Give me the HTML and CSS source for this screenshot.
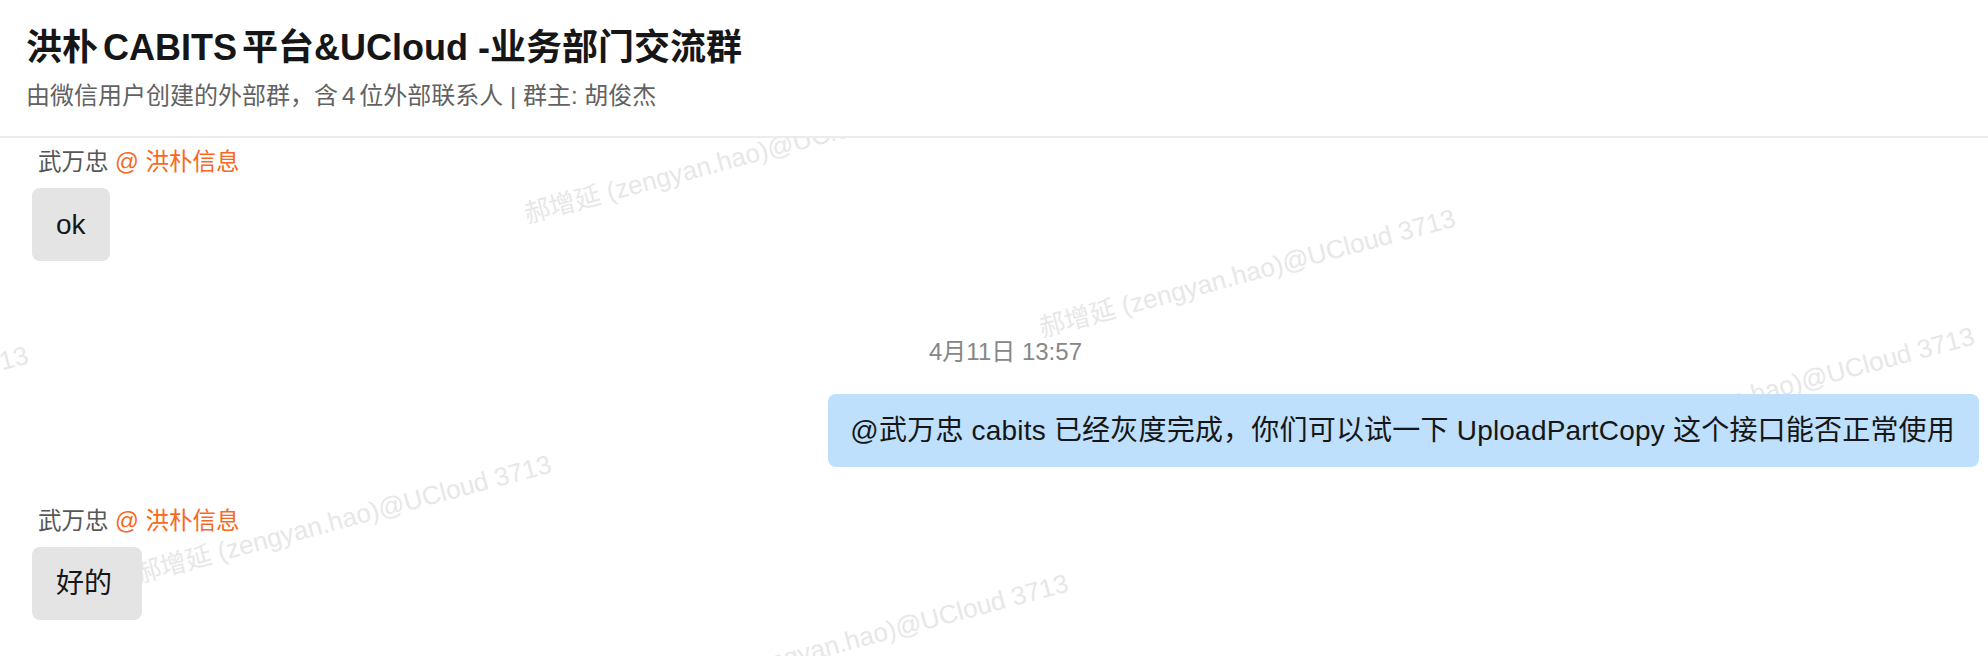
FILE: index.html
```html
<!DOCTYPE html>
<html lang="zh-CN">
<head>
<meta charset="utf-8">
<title>洪朴CABITS平台&amp;UCloud -业务部门交流群</title>
<link rel="stylesheet" href="styles.css">
</head>
<body>
<div class="app">
  <div class="watermarks" aria-hidden="true">
    <span class="wm wm-a">郝增延 (zengyan.hao)@UCloud 3713</span>
    <span class="wm wm-b">郝增延 (zengyan.hao)@UCloud 3713</span>
    <span class="wm wm-c">郝增延 (zengyan.hao)@UCloud 3713</span>
    <span class="wm wm-d">郝增延 (zengyan.hao)@UCloud 3713</span>
    <span class="wm wm-e">郝增延 (zengyan.hao)@UCloud 3713</span>
    <span class="wm wm-f">郝增延 (zengyan.hao)@UCloud 3713</span>
  </div>

  <header class="header">
    <h1 class="title">洪朴<span class="lat">CABITS</span>平台&amp;UCloud -业务部门交流群</h1>
    <p class="subtitle">由微信用户创建的外部群，含<span class="lat">4</span>位外部联系人 | 群主: 胡俊杰</p>
  </header>

  <main class="chat">
    <div class="msg msg-left">
      <div class="sender">武万忠 <span class="org">@ 洪朴信息</span></div>
      <div class="bubble bubble-gray">ok</div>
    </div>

    <div class="time">4月11日 13:57</div>

    <div class="msg msg-right">
      <div class="bubble bubble-blue">@武万忠 cabits<span class="gap"></span>已经灰度完成，你们可以试一下<span class="gap"></span>UploadPartCopy<span class="gap"></span>这个接口能否正常使用</div>
    </div>

    <div class="msg msg-left msg-after-right">
      <div class="sender">武万忠 <span class="org">@ 洪朴信息</span></div>
      <div class="bubble bubble-gray bubble-wide">好的</div>
    </div>
  </main>
</div>
</body>
</html>
```

FILE: styles.css
```css
* {
  box-sizing: border-box;
}

html, body {
  margin: 0;
  padding: 0;
  background: #ffffff;
}

body {
  font-family: "Liberation Sans", "Noto Sans CJK SC", sans-serif;
  color: #1a1a1a;
}

.app {
  position: relative;
  min-height: 100vh;
  overflow: hidden;
}

/* watermark layer */
.watermarks {
  position: absolute;
  inset: 0;
  z-index: 0;
  pointer-events: none;
}

.wm {
  position: absolute;
  white-space: nowrap;
  font-size: 26px;
  line-height: 26px;
  color: #e7e7e7;
  transform-origin: left bottom;
  transform: rotate(-15deg);
}

.wm-a { left: 528px; top: 201px; }
.wm-b { left: 1043px; top: 315px; }
.wm-c { left: 1562px; top: 433px; }
.wm-d { left: -384px; top: 452px; }
.wm-e { left: 139px; top: 561px; }
.wm-f { left: 656px; top: 680px; }

/* header */
.header {
  position: relative;
  z-index: 2;
  background: #ffffff;
  padding: 24px 30px 24px 26px;
  border-bottom: 2px solid #ececec;
}

.title {
  margin: 0;
  font-size: 36px;
  line-height: 48px;
  font-weight: 700;
  color: #161616;
  white-space: nowrap;
}

.lat {
  margin: 0 5px;
}

.subtitle {
  margin: 8px 0 0;
  font-size: 24px;
  line-height: 32px;
  color: #626262;
  white-space: nowrap;
}

.subtitle .lat {
  margin: 0 4px;
}

/* chat */
.chat {
  position: relative;
  z-index: 1;
  display: flex;
  flex-direction: column;
  padding: 8px 9px 0 32px;
}

.msg {
  display: flex;
  flex-direction: column;
  align-items: flex-start;
}

.msg-right {
  align-items: flex-end;
}

.msg-after-right {
  margin-top: 38px;
}

.sender {
  padding-left: 6px;
  font-size: 23.5px;
  line-height: 32px;
  color: #575757;
  margin-bottom: 10px;
  white-space: nowrap;
}

.org {
  color: #f8681f;
}

.bubble {
  font-size: 28px;
  line-height: 41px;
  padding: 16px 24px;
  border-radius: 8px;
  color: #161616;
  white-space: nowrap;
}

.bubble-gray {
  background: #e4e4e4;
}

.bubble-wide {
  padding-right: 30px;
}

.bubble-blue {
  background: #bee0fc;
  padding-left: 22px;
  letter-spacing: 0.2px;
}

.gap {
  display: inline-block;
  width: 8px;
}

.time {
  margin: 75px 0 26px;
  text-align: center;
  font-size: 24px;
  line-height: 32px;
  color: #878787;
}
```
